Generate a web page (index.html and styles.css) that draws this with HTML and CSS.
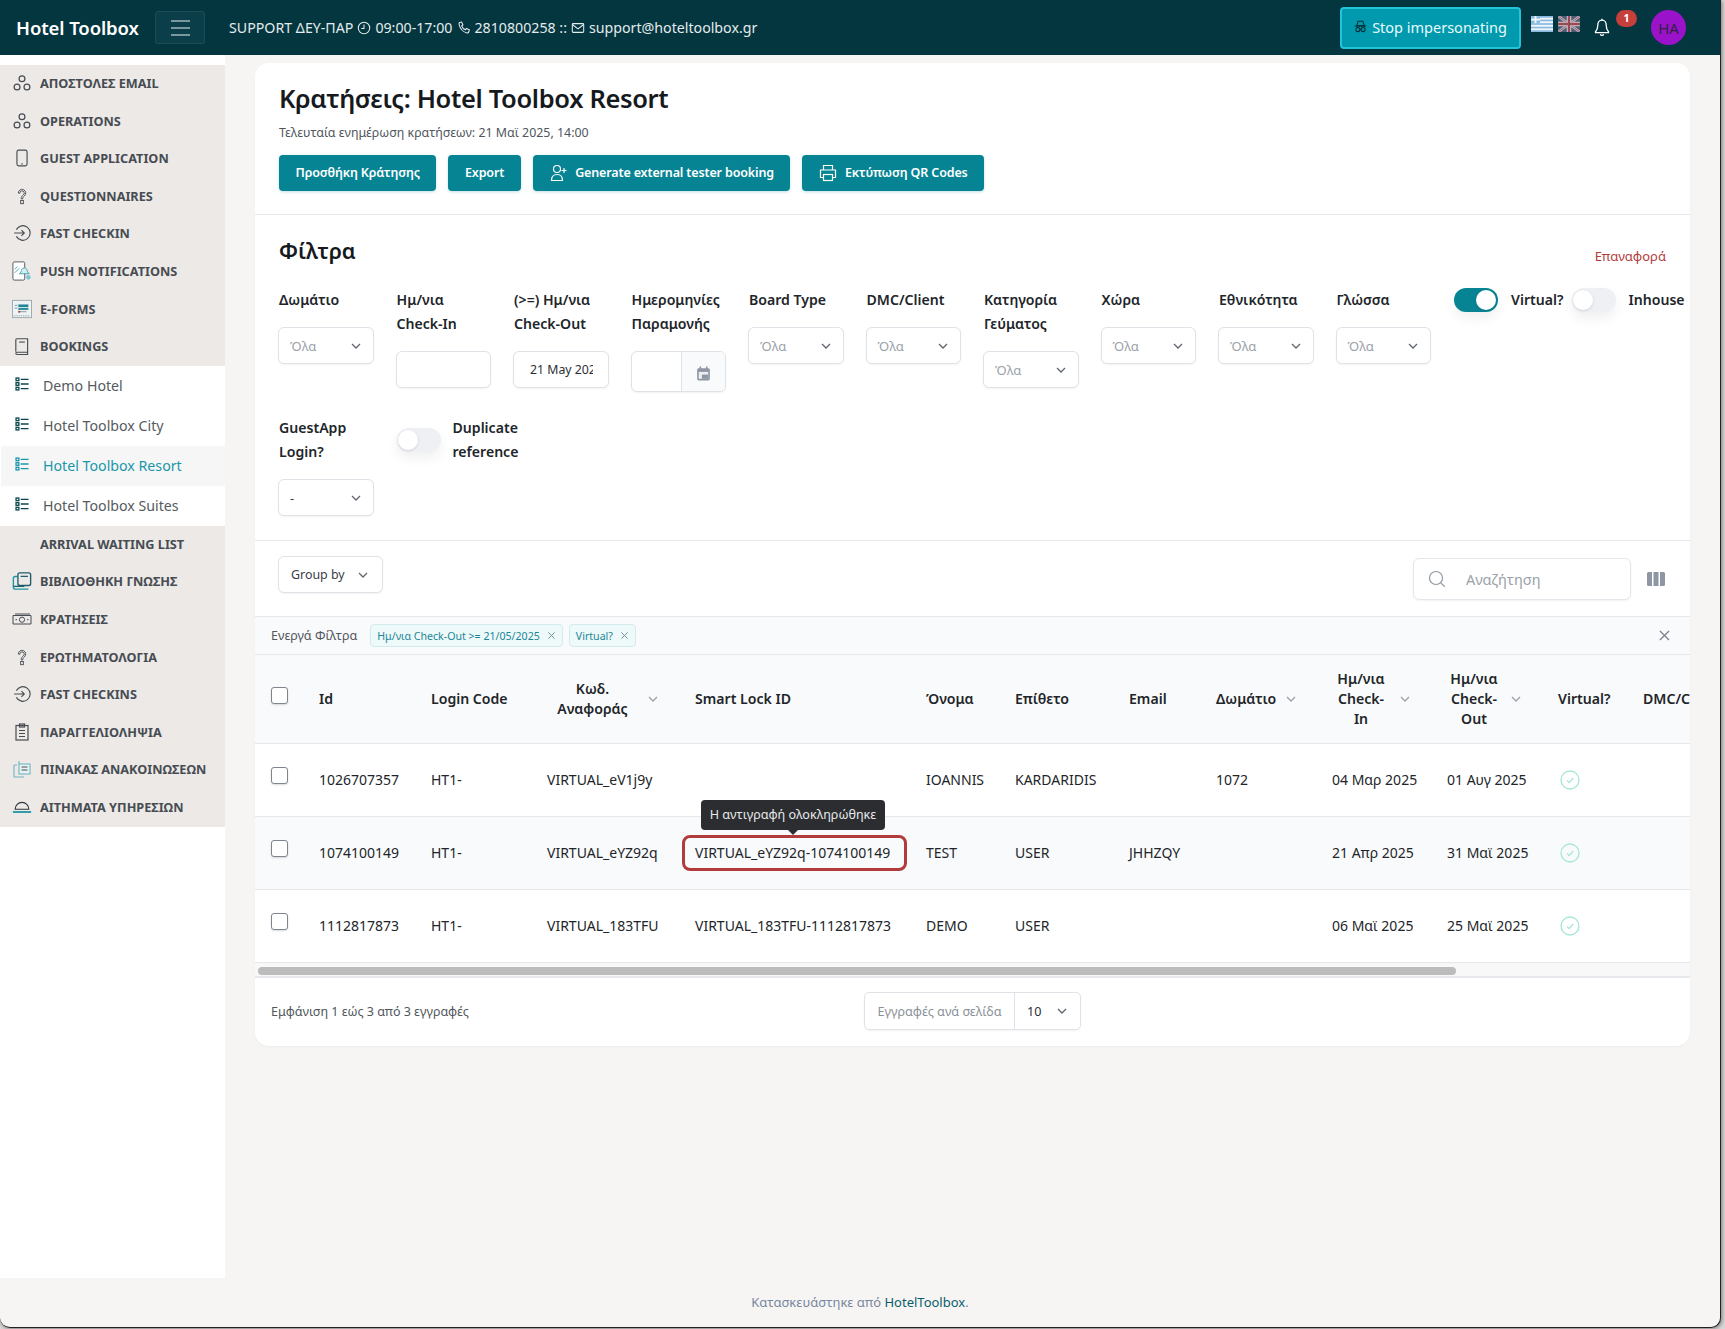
FILE: index.html
```html
<!DOCTYPE html>
<html lang="el">
<head>
<meta charset="utf-8">
<title>Κρατήσεις: Hotel Toolbox Resort</title>
<link rel="stylesheet" href="styles.css">
</head>
<body>
<svg class="sprite" width="0" height="0" aria-hidden="true">
  <symbol id="i-chev" viewBox="0 0 12 12"><path d="M2 4l4 4 4-4" fill="none" stroke="currentColor" stroke-width="1.3"/></symbol>
  <symbol id="i-cogs" viewBox="0 0 16 16"><g fill="none" stroke="currentColor" stroke-width="1.1"><circle cx="8" cy="4.2" r="2.6"/><circle cx="3.6" cy="11.6" r="2.6"/><circle cx="12.4" cy="11.6" r="2.6"/></g></symbol>
  <symbol id="i-phone" viewBox="0 0 16 16"><rect x="3.5" y="1" width="9" height="14" rx="1.6" fill="none" stroke="currentColor" stroke-width="1"/><path d="M7.400 13.200h1.200" stroke="currentColor"/></symbol>
  <symbol id="i-q" viewBox="0 0 16 16"><path d="M4.700 5.400a3.300 3.300 0 1 1 5.300 2.600C9 8.800 8.700 9.400 8.700 10.600H7.300c0-1.800.5-2.500 1.700-3.400a2 2 0 1 0-3-1.600z" fill="none" stroke="currentColor" stroke-width=".8"/><rect x="6.800" y="12" width="2.400" height="2.800" fill="none" stroke="currentColor" stroke-width=".8"/></symbol>
  <symbol id="i-login" viewBox="0 0 16 16"><path d="M3 5a6.500 6.500 0 1 1 0 6" fill="none" stroke="currentColor" stroke-width="1"/><path d="M1 8h9M7.500 5.500L10 8l-2.500 2.500" fill="none" stroke="currentColor" stroke-width="1"/></symbol>
  <symbol id="i-list" viewBox="0 0 16 16"><g fill="none" stroke="currentColor" stroke-width="1.500"><rect x="1.200" y="1.200" width="3.200" height="3"/><rect x="1.200" y="6.500" width="3.200" height="3"/><rect x="1.200" y="11.800" width="3.200" height="3"/><path d="M6.500 2.700h9M6.500 8h9M6.500 13.300h9"/></g></symbol>
  <symbol id="i-book" viewBox="0 0 16 16"><path d="M2.500 13V2.500a1 1 0 0 1 1-1h9.500v12H3.500a1 1 0 0 0 0 2H13v-2" fill="none" stroke="currentColor" stroke-width="1"/><path d="M5.500 4.500h5" stroke="currentColor" stroke-width="1"/></symbol>
  <symbol id="i-push" viewBox="0 0 22 22"><rect x="1" y="1" width="13" height="20" rx="1.500" fill="#fff" stroke="#4a4f55"/><path d="M8 14c2-1 2-3 3-5s4-2 5 0 1 4 3 5z" fill="#d6eef2" stroke="#3f9fae"/><circle cx="18" cy="18" r="2.500" fill="#7fc6d0"/><path d="M3 9l3-3M3 13l5-5" stroke="#3f9fae"/></symbol>
  <symbol id="i-form" viewBox="0 0 22 20"><rect x=".5" y=".5" width="21" height="19" fill="#eef4f5" stroke="#9aa6ab"/><rect x="7" y="5" width="11" height="3" fill="#1f8796"/><rect x="7" y="9" width="11" height="2" fill="#1f8796"/><path d="M3 6h3M3 9h3M7 13h9" stroke="#7f8c91"/><rect x="7" y="12" width="2" height="2" fill="#b23b3b"/><path d="M2 17.500h18" stroke="#7f8c91" stroke-dasharray="1 1"/></symbol>
  <symbol id="i-lib" viewBox="0 0 22 20"><path d="M6 5H3.500A2 2 0 0 0 1.500 7v10a2 2 0 0 0 2 2H18" fill="none" stroke="#1f95a6" stroke-width="1.500"/><rect x="6.500" y="1" width="14" height="14" rx="2" fill="none" stroke="#1f5f6c" stroke-width="1.500"/><path d="M9.500 5h8M1.500 16h12" stroke="#1f5f6c" stroke-width="1.300"/></symbol>
  <symbol id="i-money" viewBox="0 0 20 14"><g fill="none" stroke="#474c52" stroke-width="1"><path d="M1 3.500h18v8.500H1z"/><circle cx="10" cy="7.700" r="2.600"/><path d="M3 2h15M3.500 7.700h1.500M15 7.700h1.500"/></g></symbol>
  <symbol id="i-clip" viewBox="0 0 16 18"><g fill="none" stroke="currentColor" stroke-width="1.200"><rect x="2" y="2.500" width="12" height="14.500"/><rect x="5.500" y="1" width="5" height="3"/><path d="M5 7.500h6M5 10.500h6M5 13.500h6"/></g></symbol>
  <symbol id="i-board" viewBox="0 0 20 20"><g fill="none" stroke="#6fb6c2" stroke-width="1.100"><path d="M2 6h3M2 6v12h10M7 2v3"/><rect x="7" y="5" width="11" height="10" fill="#e6f2f4"/></g><path d="M9.500 8h6M9.500 11h6" stroke="#4a4f55"/></symbol>
  <symbol id="i-bellhop" viewBox="0 0 22 16"><path d="M3.500 10.500a7.500 7.500 0 0 1 15 0z" fill="none" stroke="#2f3a40" stroke-width="1.300"/><path d="M1 13.500h20" stroke="#1f95a6" stroke-width="2"/></symbol>
  <symbol id="i-check" viewBox="0 0 20 20"><circle cx="10" cy="10" r="9" fill="none" stroke="#a6e6d8" stroke-width="1.300"/><path d="M7 10.500l2.200 2.200L13.200 8" fill="none" stroke="#a6e6d8" stroke-width="1.200"/></symbol>
  <symbol id="i-x" viewBox="0 0 10 10"><path d="M1.500 1.500l7 7m0-7l-7 7" stroke="currentColor" stroke-width="1"/></symbol>
</svg>

<div class="window">
<header class="topbar">
  <a class="brand">Hotel Toolbox</a>
  <button class="burger" aria-label="menu"><span></span><span></span><span></span></button>
  <div class="support">
    <span>SUPPORT ΔΕΥ-ΠΑΡ</span>
    <svg class="sup-ic" viewBox="0 0 16 16"><circle cx="8" cy="8" r="6.500" fill="none" stroke="currentColor" stroke-width="1.200"/><path d="M8 4v4.500H4.800" fill="none" stroke="currentColor" stroke-width="1.200"/></svg>
    <span>09:00-17:00</span>
    <svg class="sup-ic" viewBox="0 0 16 16"><path d="M3 1.800l2.300-.6 1.500 3.300-1.500 1.200a8 8 0 0 0 4.300 4.300l1.200-1.500 3.300 1.500-.6 2.300c-.3 1-1.200 1.500-2.200 1.300C6.500 12.300 3.600 9.400 2.400 4 2.100 3 2.500 2.100 3 1.800z" fill="none" stroke="currentColor" stroke-width="1.200"/></svg>
    <span>2810800258 ::</span>
    <svg class="sup-ic" viewBox="0 0 16 16"><rect x="1.500" y="3" width="13" height="10" rx="1" fill="none" stroke="currentColor" stroke-width="1.200"/><path d="M1.500 4l6.500 5 6.500-5" fill="none" stroke="currentColor" stroke-width="1.200"/></svg>
    <span>support@hoteltoolbox.gr</span>
  </div>
  <div class="top-right">
    <button class="stop">
      <svg class="spy" viewBox="0 0 16 16"><path d="M5 1.500h6l1.500 5.500h-9z" fill="none" stroke="#062d36" stroke-width="1.300"/><path d="M1 7.500h14" stroke="#062d36" stroke-width="1.400"/><circle cx="4.800" cy="11.800" r="2.500" fill="none" stroke="#062d36" stroke-width="1.300"/><circle cx="11.200" cy="11.800" r="2.500" fill="none" stroke="#062d36" stroke-width="1.300"/><path d="M7.300 11.500h1.400" stroke="#062d36" stroke-width="1.200"/></svg>
      Stop impersonating
    </button>
    <svg class="flag" viewBox="0 0 22 16"><rect width="22" height="16" fill="#8abbe2"/><g fill="#f4f7fa"><rect y="1.800" width="22" height="1.800"/><rect y="5.300" width="22" height="1.800"/><rect y="8.900" width="22" height="1.800"/><rect y="12.400" width="22" height="1.800"/><rect width="9" height="7.100" fill="#8abbe2"/><rect x="3.600" width="1.800" height="7.100"/><rect y="2.700" width="9" height="1.800"/></g></svg>
    <svg class="flag" viewBox="0 0 22 16"><rect width="22" height="16" fill="#4f5b74"/><path d="M0 0l22 16M22 0L0 16" stroke="#b9bdc6" stroke-width="2.600"/><path d="M0 0l22 16M22 0L0 16" stroke="#a35a62" stroke-width="1"/><path d="M11 0v16M0 8h22" stroke="#c8cbd2" stroke-width="4.500"/><path d="M11 0v16M0 8h22" stroke="#9c4a52" stroke-width="2.400"/></svg>
    <span class="bell-wrap">
      <svg class="bell" viewBox="0 0 16 20"><path d="M8 2.200c-2.800 0-4.200 2-4.200 5 0 3.500-1 5-2.300 6.500v1h13v-1c-1.300-1.500-2.300-3-2.300-6.500 0-3-1.400-5-4.200-5z" fill="none" stroke="#fff" stroke-width="1.300"/><path d="M6.300 16.200a1.800 1.800 0 0 0 3.400 0" fill="none" stroke="#fff" stroke-width="1.300"/><path d="M8 .8v1.400" stroke="#fff" stroke-width="1.300"/></svg>
      <b class="badge">1</b>
    </span>
    <span class="avatar">HA</span>
  </div>
</header>

<div class="shell">
  <aside class="side">
    <nav class="side-nav">
      <a class="nav-item"><svg class="ni"><use href="#i-cogs"/></svg>ΑΠΟΣΤΟΛΕΣ EMAIL</a>
      <a class="nav-item"><svg class="ni"><use href="#i-cogs"/></svg>OPERATIONS</a>
      <a class="nav-item"><svg class="ni"><use href="#i-phone"/></svg>GUEST APPLICATION</a>
      <a class="nav-item"><svg class="ni"><use href="#i-q"/></svg>QUESTIONNAIRES</a>
      <a class="nav-item"><svg class="ni"><use href="#i-login"/></svg>FAST CHECKIN</a>
      <a class="nav-item"><svg class="ni big"><use href="#i-push"/></svg>PUSH NOTIFICATIONS</a>
      <a class="nav-item"><svg class="ni big"><use href="#i-form"/></svg>E-FORMS</a>
      <a class="nav-item"><svg class="ni"><use href="#i-book"/></svg>BOOKINGS</a>
      <a class="sub-item"><svg class="si"><use href="#i-list"/></svg>Demo Hotel</a>
      <a class="sub-item"><svg class="si"><use href="#i-list"/></svg>Hotel Toolbox City</a>
      <a class="sub-item active"><svg class="si"><use href="#i-list"/></svg>Hotel Toolbox Resort</a>
      <a class="sub-item"><svg class="si"><use href="#i-list"/></svg>Hotel Toolbox Suites</a>
      <a class="nav-item"><span class="ni"></span>ARRIVAL WAITING LIST</a>
      <a class="nav-item"><svg class="ni big"><use href="#i-lib"/></svg>ΒΙΒΛΙΟΘΗΚΗ ΓΝΩΣΗΣ</a>
      <a class="nav-item"><svg class="ni big"><use href="#i-money"/></svg>ΚΡΑΤΗΣΕΙΣ</a>
      <a class="nav-item"><svg class="ni"><use href="#i-q"/></svg>ΕΡΩΤΗΜΑΤΟΛΟΓΙΑ</a>
      <a class="nav-item"><svg class="ni"><use href="#i-login"/></svg>FAST CHECKINS</a>
      <a class="nav-item"><svg class="ni"><use href="#i-clip"/></svg>ΠΑΡΑΓΓΕΛΙΟΛΗΨΙΑ</a>
      <a class="nav-item"><svg class="ni big"><use href="#i-board"/></svg>ΠΙΝΑΚΑΣ ΑΝΑΚΟΙΝΩΣΕΩΝ</a>
      <a class="nav-item"><svg class="ni big"><use href="#i-bellhop"/></svg>ΑΙΤΗΜΑΤΑ ΥΠΗΡΕΣΙΩΝ</a>
    </nav>
  </aside>

  <main class="main">
    <section class="card">
      <div class="head">
        <h1>Κρατήσεις: Hotel Toolbox Resort</h1>
        <p class="updated">Τελευταία ενημέρωση κρατήσεων: 21 Μαϊ 2025, 14:00</p>
        <div class="actions">
          <button class="btn">Προσθήκη Κράτησης</button>
          <button class="btn">Export</button>
          <button class="btn"><svg class="btn-ic" viewBox="0 0 18 18"><circle cx="8" cy="5" r="3.500" fill="none" stroke="#fff" stroke-width="1.200"/><path d="M2.500 16.500c0-4 2-6 5.500-6s5.500 2 5.500 6z" fill="none" stroke="#fff" stroke-width="1.200"/><path d="M15 4v5M12.500 6.500h5" stroke="#fff" stroke-width="1.200"/></svg>Generate external tester booking</button>
          <button class="btn"><svg class="btn-ic" viewBox="0 0 18 18"><path d="M4.500 6V1.500h9V6M4.500 13.500h-3V6h15v7.500h-3" fill="none" stroke="#fff" stroke-width="1.200"/><rect x="4.500" y="10.500" width="9" height="6" fill="none" stroke="#fff" stroke-width="1.200"/></svg>Εκτύπωση QR Codes</button>
        </div>
      </div>

      <div class="filters">
        <div class="filters-top">
          <h2>Φίλτρα</h2>
          <a class="reset">Επαναφορά</a>
        </div>
        <div class="filter-grid">
          <div class="f"><label>Δωμάτιο</label><div class="sel ph">Όλα<svg class="chev"><use href="#i-chev"/></svg></div></div>
          <div class="f"><label>Ημ/νια<br>Check-In</label><div class="inp"></div></div>
          <div class="f"><label>(&gt;=) Ημ/νια<br>Check-Out</label><div class="inp val"><span>21 May 2025</span></div></div>
          <div class="f"><label>Ημερομηνίες<br>Παραμονής</label>
            <div class="inp-group"><div class="ig-main"></div><div class="ig-add"><svg viewBox="0 0 16 16"><path d="M2 4.500a1.500 1.500 0 0 1 1.500-1.500h9A1.500 1.500 0 0 1 14 4.500V13a1.500 1.500 0 0 1-1.500 1.500h-9A1.500 1.500 0 0 1 2 13z" fill="#8e96a3"/><path d="M5 1.500V4M11 1.500V4" stroke="#8e96a3" stroke-width="1.500"/><rect x="3.500" y="6.500" width="9" height="6.500" fill="#eceef1"/><rect x="6.500" y="9" width="6" height="4" fill="#8e96a3"/></svg></div></div>
          </div>
          <div class="f"><label>Board Type</label><div class="sel ph">Όλα<svg class="chev"><use href="#i-chev"/></svg></div></div>
          <div class="f"><label>DMC/Client</label><div class="sel ph">Όλα<svg class="chev"><use href="#i-chev"/></svg></div></div>
          <div class="f"><label>Κατηγορία<br>Γεύματος</label><div class="sel ph">Όλα<svg class="chev"><use href="#i-chev"/></svg></div></div>
          <div class="f"><label>Χώρα</label><div class="sel ph">Όλα<svg class="chev"><use href="#i-chev"/></svg></div></div>
          <div class="f"><label>Εθνικότητα</label><div class="sel ph">Όλα<svg class="chev"><use href="#i-chev"/></svg></div></div>
          <div class="f"><label>Γλώσσα</label><div class="sel ph">Όλα<svg class="chev"><use href="#i-chev"/></svg></div></div>
          <div class="f tog-f"><span class="toggle on"><i></i></span><label>Virtual?</label></div>
          <div class="f tog-f"><span class="toggle"><i></i></span><label>Inhouse</label></div>
          <div class="f"><label>GuestApp<br>Login?</label><div class="sel">-<svg class="chev"><use href="#i-chev"/></svg></div></div>
          <div class="f tog-f dup"><span class="toggle"><i></i></span><label>Duplicate<br>reference</label></div>
        </div>
      </div>

      <div class="toolbar">
        <button class="group-by">Group by<svg class="chev"><use href="#i-chev"/></svg></button>
        <div class="tool-right">
          <div class="search">
            <svg viewBox="0 0 18 18"><circle cx="8" cy="8" r="6.500" fill="none" stroke="#8f97a3" stroke-width="1.200"/><path d="M12.800 12.800l4 4" stroke="#8f97a3" stroke-width="1.200"/></svg>
            <span>Αναζήτηση</span>
          </div>
          <svg class="cols" viewBox="0 0 18 14"><path d="M1.500 0H5v14H1.500A1.500 1.500 0 0 1 0 12.500v-11A1.500 1.500 0 0 1 1.500 0zM6.500 0h5v14h-5zM13 0h3.500A1.500 1.500 0 0 1 18 1.500v11a1.500 1.500 0 0 1-1.500 1.500H13z" fill="#8e96a3"/></svg>
        </div>
      </div>

      <div class="active-filters">
        <span class="af-label">Ενεργά Φίλτρα</span>
        <span class="chip">Ημ/νια Check-Out &gt;= 21/05/2025<svg><use href="#i-x"/></svg></span>
        <span class="chip">Virtual?<svg><use href="#i-x"/></svg></span>
        <svg class="af-close"><use href="#i-x"/></svg>
      </div>

      <div class="table-wrap">
        <table class="grid">
          <colgroup>
            <col class="c-check"><col class="c-id"><col class="c-login"><col class="c-ref"><col class="c-lock"><col class="c-name"><col class="c-sur"><col class="c-mail"><col class="c-room"><col class="c-in"><col class="c-out"><col class="c-virt"><col class="c-dmc">
          </colgroup>
          <thead>
            <tr>
              <th><span class="cb"></span></th>
              <th>Id</th>
              <th>Login Code</th>
              <th><div class="sort"><span class="w-ref">Κωδ.<br>Αναφοράς</span><svg class="chev-s"><use href="#i-chev"/></svg></div></th>
              <th>Smart Lock ID</th>
              <th>Όνομα</th>
              <th>Επίθετο</th>
              <th>Email</th>
              <th><div class="sort"><span>Δωμάτιο</span><svg class="chev-s"><use href="#i-chev"/></svg></div></th>
              <th><div class="sort"><span class="w-in">Ημ/νια<br>Check-<br>In</span><svg class="chev-s"><use href="#i-chev"/></svg></div></th>
              <th><div class="sort"><span class="w-out">Ημ/νια<br>Check-<br>Out</span><svg class="chev-s"><use href="#i-chev"/></svg></div></th>
              <th>Virtual?</th>
              <th>DMC/Client</th>
            </tr>
          </thead>
          <tbody>
            <tr>
              <td><span class="cb"></span></td><td>1026707357</td><td>HT1-</td><td>VIRTUAL_eV1j9y</td><td></td><td>IOANNIS</td><td>KARDARIDIS</td><td></td><td>1072</td><td>04 Μαρ 2025</td><td>01 Αυγ 2025</td><td><svg class="ok"><use href="#i-check"/></svg></td><td></td>
            </tr>
            <tr class="hover">
              <td><span class="cb"></span></td><td>1074100149</td><td>HT1-</td><td>VIRTUAL_eYZ92q</td>
              <td class="lock-cell"><span class="copied">VIRTUAL_eYZ92q-1074100149<span class="tip">Η αντιγραφή ολοκληρώθηκε</span></span></td>
              <td>TEST</td><td>USER</td><td>JHHZQY</td><td></td><td>21 Απρ 2025</td><td>31 Μαϊ 2025</td><td><svg class="ok"><use href="#i-check"/></svg></td><td></td>
            </tr>
            <tr>
              <td><span class="cb"></span></td><td>1112817873</td><td>HT1-</td><td>VIRTUAL_183TFU</td><td>VIRTUAL_183TFU-1112817873</td><td>DEMO</td><td>USER</td><td></td><td></td><td>06 Μαϊ 2025</td><td>25 Μαϊ 2025</td><td><svg class="ok"><use href="#i-check"/></svg></td><td></td>
            </tr>
          </tbody>
        </table>
      </div>
      <div class="hscroll"><div class="thumb"></div></div>

      <div class="card-foot">
        <span class="count">Εμφάνιση 1 εώς 3 από 3 εγγραφές</span>
        <div class="perpage">
          <span class="pp-label">Εγγραφές ανά σελίδα</span>
          <span class="pp-val">10<svg class="chev"><use href="#i-chev"/></svg></span>
        </div>
      </div>
    </section>
    <footer class="page-foot">Κατασκευάστηκε από <a>HotelToolbox</a>.</footer>
  </main>
</div>
</div>
</body>
</html>
```
FILE: styles.css
```css
* { box-sizing: border-box; }
html, body { margin: 0; padding: 0; height: 1329px; overflow: hidden; }
body {
  font-family: "Noto Sans", "Open Sans", sans-serif;
  font-size: 14px;
  color: #212529;
  background: #d9d9d9;
}
.sprite { position: absolute; }
svg { display: block; flex: none; }
button { font-family: inherit; cursor: pointer; }

.window {
  width: 1721px; height: 1328px; background: #f6f5f3; overflow: hidden;
  border-right: 1px solid #222; border-bottom: 1px solid #222; border-radius: 0 0 10px 10px;
  box-shadow: 1px 1px 4px rgba(0,0,0,.45);
}

.topbar {
  height: 55px;
  background: #03363f;
  display: flex;
  align-items: center;
  padding-left: 16px;
  color: #e9eef0;
}
.brand { font-size: 18.5px; font-weight: 600; color: #fff; width: 139px; white-space: nowrap; letter-spacing: -.1px; }
.burger {
  width: 50px; height: 33px; background: #0a3f49;
  border: 1px solid #1d4e58; border-radius: 3px;
  display: flex; flex-direction: column; justify-content: center; align-items: center; gap: 5px;
  padding: 0;
}
.burger span { width: 19px; height: 2px; background: #7a979d; }
.support {
  margin-left: 24px; display: flex; align-items: center; gap: 4px;
  font-size: 14.2px; color: #e4ebed; white-space: nowrap;
}
.sup-ic { width: 14px; height: 14px; }
.top-right { margin-left: auto; display: flex; align-items: center; height: 55px; }
.stop {
  width: 181px; height: 42px; margin-right: 10px;
  background: #0099ae; border: 2px solid #22c4da; border-radius: 4px;
  color: #e8fafc; font-size: 14.5px; line-height: 18px;
  display: flex; align-items: center; justify-content: center; gap: 5px; padding: 0 0 2px; white-space: nowrap;
}
.spy { width: 13px; height: 13px; }
.flag { width: 22px; height: 16px; margin-right: 5px; margin-top: -7px; }
.bell-wrap { position: relative; margin-left: 9px; width: 20px; }
.bell { width: 16px; height: 20px; }
.badge {
  position: absolute; left: 22px; top: -8px; width: 21px; height: 17px; border-radius: 9px;
  background: #c63f3a; color: #fff; font-size: 10.5px; font-weight: 700;
  display: flex; align-items: center; justify-content: center;
}
.avatar {
  width: 35px; height: 35px; border-radius: 50%; background: #9b12cb; color: #2c2440;
  font-size: 15px; display: flex; align-items: center; justify-content: center;
  margin-left: 37px; margin-right: 34px;
}

.shell { display: flex; height: 1273px; }
.side { width: 225px; height: 1223px; background: #fff; padding-top: 10px; flex: none; }
.nav-item {
  display: flex; align-items: center; height: 37.6px; background: #ece9e7; padding-bottom: 1.5px;
  color: #474c52; font-size: 12.7px; font-weight: 700; white-space: nowrap; padding-left: 13px;
}
.ni { width: 18px; height: 18px; margin-right: 9px; color: #474c52; display: block; flex: none; }
.ni.big { width: 20px; height: 20px; margin-left: -1px; margin-right: 8px; }
.sub-item {
  display: flex; align-items: center; height: 40px; font-size: 14.2px; color: #555a60; padding-left: 15px; white-space: nowrap;
}
.si { width: 14px; height: 14px; margin-right: 14px; margin-top: -4px; color: #0e4651; }
.sub-item.active { background: #f6f6f6; color: #1a97aa; border-left: 1px solid #fff; padding-left: 14px; }
.sub-item.active .si { color: #1a97aa; }

.main { flex: 1; min-width: 0; padding: 8px 0 0 30px; }
.card {
  width: 1435px; height: 983px; background: #fff; border-radius: 14px;
  box-shadow: 0 1px 2px rgba(0,0,0,.04);
}
.head { height: 152px; padding: 21px 24px 0; border-bottom: 1px solid #e6e8eb; }
h1 { margin: 0; font-size: 25.5px; line-height: 29px; font-weight: 600; color: #16191d; white-space: nowrap; letter-spacing: -.35px; }
.updated { margin: 11px 0 0; font-size: 12.4px; line-height: 18px; color: #50565c; }
.actions { display: flex; gap: 12px; margin-top: 13px; }
.btn {
  height: 36px; padding: 0 16.5px 1px; background: #068494; color: #fff; border: 0; border-radius: 4px;
  font-size: 12.5px; letter-spacing: -.14px; font-weight: 600; display: flex; align-items: center; gap: 8px; white-space: nowrap;
  box-shadow: 0 1px 3px rgba(6,132,148,.25);
}
.btn-ic { width: 18px; height: 18px; }

.filters { height: 326px; padding: 20px 24px 0; border-bottom: 1px solid #e6e8eb; }
.filters-top { display: flex; justify-content: space-between; height: 33px; align-items: center; }
h2 { margin: -1px 0 0; font-size: 21.5px; font-weight: 600; color: #16191d; line-height: 30px; }
.reset { font-size: 13px; color: #b23b3b; margin-top: 9px; }
.filter-grid {
  display: grid; grid-template-columns: repeat(12, 93.5px); column-gap: 24px; row-gap: 24px; margin-top: 20px;
}
.f label { display: block; font-size: 14.1px; line-height: 24px; font-weight: 600; color: #212529; white-space: nowrap; }
.sel, .inp, .inp-group, .group-by {
  border: 1px solid #dfe3e7; border-radius: 6px; background: #fff; height: 37px;
  box-shadow: 0 1px 2px rgba(0,0,0,.05);
}
.f .sel, .f .inp, .f .inp-group { margin-top: 15px; width: 95.5px; margin-left: -1px; }
.sel {
  display: flex; align-items: center; justify-content: space-between; padding: 0 11px 0 11px; font-size: 13px; color: #3a4047;
}
.sel.ph { color: #9aa1a9; }
.chev { width: 12px; height: 12px; color: #5f666e; }
.inp.val { font-size: 12.3px; color: #2a2f35; display: flex; align-items: center; padding: 0 15px 0 16px; }
.inp.val span { overflow: hidden; white-space: nowrap; display: block; }
.inp-group { display: flex; height: 41px; overflow: hidden; }
.f .inp-group { height: 41px; }
.ig-main { flex: 1; }
.ig-add { width: 44px; background: #f9fafb; border-left: 1px solid #dfe3e7; display: flex; align-items: center; justify-content: center; padding-top: 3px; }
.ig-add svg { width: 17px; height: 17px; }
.tog-f { display: flex; align-items: flex-start; gap: 13px; }
.tog-f label { line-height: 24px; }
.toggle {
  display: block; width: 44px; height: 24px; border-radius: 12px; background: #eef0f4; position: relative; flex: none;
  box-shadow: 0 6px 12px rgba(60,70,90,.08);
}
.toggle i {
  position: absolute; left: 1px; top: 2px; width: 20px; height: 20px; border-radius: 50%; background: #fff;
  box-shadow: 0 1px 3px rgba(40,50,70,.15);
}
.toggle.on { background: #068494; }
.toggle.on i { left: 22px; }
.tog-f.dup { gap: 12px; align-items: center; align-self: start; }

.toolbar { height: 76px; display: flex; justify-content: space-between; padding: 15px 25px 0 23px; border-bottom: 1px solid #e6e8eb; }
.group-by {
  width: 105px; display: flex; align-items: center; justify-content: space-between; padding: 0 13px 0 12px; font-size: 12.4px; color: #3a4047;
}
.tool-right { display: flex; align-items: flex-start; gap: 16px; padding-top: 2px; }
.search {
  width: 218px; height: 42px; border: 1px solid #e3e6ea; border-radius: 6px; display: flex; align-items: center; gap: 20px; padding: 0 0 1px 14px;
  color: #9aa1a9; font-size: 14.5px; box-shadow: 0 1px 2px rgba(0,0,0,.05);
}
.search svg { width: 18px; height: 18px; }
.cols { width: 18px; height: 14px; margin-top: 14px; }

.active-filters {
  height: 38px; background: #f9fafb; border-bottom: 1px solid #e6e8eb; display: flex; align-items: center; padding: 0 19px 0 16px; gap: 6px;
}
.af-label { font-size: 12.5px; color: #50565c; margin-right: 7px; }
.chip {
  height: 23px; background: #eef9fa; border: 1px solid #d3ebee; border-radius: 4px; color: #1a8798; font-size: 10.6px;
  display: flex; align-items: center; gap: 7px; padding: 0 6px 0 6px; white-space: nowrap;
}
.chip svg { width: 9px; height: 9px; color: #6b8b92; }
.af-close { width: 13px; height: 13px; margin-left: auto; color: #7b838c; }

.table-wrap { overflow: hidden; }
.grid { border-collapse: collapse; table-layout: fixed; width: 1500px; }
.c-check { width: 48px; } .c-id { width: 112px; } .c-login { width: 116px; } .c-ref { width: 148px; }
.c-lock { width: 231px; } .c-name { width: 89px; } .c-sur { width: 114px; } .c-mail { width: 87px; }
.c-room { width: 116px; } .c-in { width: 115px; } .c-out { width: 111px; } .c-virt { width: 85px; } .c-dmc { width: 128px; }
.grid th, .grid td { padding: 0 16px; text-align: left; white-space: nowrap; }
.grid thead tr { height: 88px; background: #f9fafb; border-bottom: 1px solid #e6e8eb; }
.grid th { font-size: 14.1px; line-height: 20px; font-weight: 600; color: #212529; }
.grid tbody tr { height: 73px; border-bottom: 1px solid #e6e8eb; }
.grid td { font-size: 14px; color: #212529; }
.grid tr.hover { background: #f9fafb; }
.sort { display: flex; align-items: center; gap: 9px; }
.w-ref, .w-in, .w-out { display: block; text-align: center; flex: none; }
.w-ref { width: 91px; } .w-in { width: 58px; } .w-out { width: 54px; }
.chev-s { width: 12px; height: 12px; color: #9aa1a9; }
.cb {
  display: block; width: 17px; height: 17px; border: 1px solid #7e858d; border-radius: 3px; background: #fff; margin: -7px 0 0 0;
  box-shadow: 0 1px 2px rgba(0,0,0,.15);
}
.grid td .cb { margin-top: -9px; }
.ok { width: 20px; height: 20px; margin-left: 2px; }
.lock-cell { overflow: visible; }
.copied {
  display: inline-block; position: relative; margin-left: -13px; padding: 0 14px 0 10px; height: 36px; line-height: 30px;
  border: 3px solid #b23b3b; border-radius: 8px;
}
.tip {
  position: absolute; left: 16px; bottom: 38px; width: 184px; height: 30px; background: #2b2d30; color: #e7e9ea; border-radius: 4px;
  font-size: 12.6px; line-height: 30px; text-align: center;
}
.tip::after {
  content: ""; position: absolute; left: 86px; bottom: -5px; border: 6px solid transparent; border-bottom: 0; border-top-color: #2b2d30;
}
.hscroll { height: 15px; background: #f8f8f8; padding: 4px 3px 0; border-bottom: 2px solid #e6e8eb; }
.thumb { width: 1198px; height: 8px; background: #bcbcbc; border-radius: 4px; }
.card-foot { display: flex; align-items: center; height: 67px; padding: 0 16px; }
.count { width: 593px; font-size: 12.5px; color: #50565c; white-space: nowrap; }
.perpage { display: flex; align-items: stretch; width: 217px; height: 38px; border: 1px solid #dfe3e7; border-radius: 5px; box-shadow: 0 1px 2px rgba(0,0,0,.05); font-size: 12.6px; }
.pp-label { width: 150px; color: #8a9199; display: flex; align-items: center; justify-content: center; border-right: 1px solid #dfe3e7; white-space: nowrap; }
.pp-val { flex: 1; display: flex; align-items: center; justify-content: space-between; padding: 0 12px; color: #2a2f35; }

.page-foot { text-align: center; margin-top: 246px; font-size: 13px; line-height: 20px; color: #7888a0; width: 1205px; padding-left: 5px; }
.page-foot a { color: #0a5d6c; }
```
